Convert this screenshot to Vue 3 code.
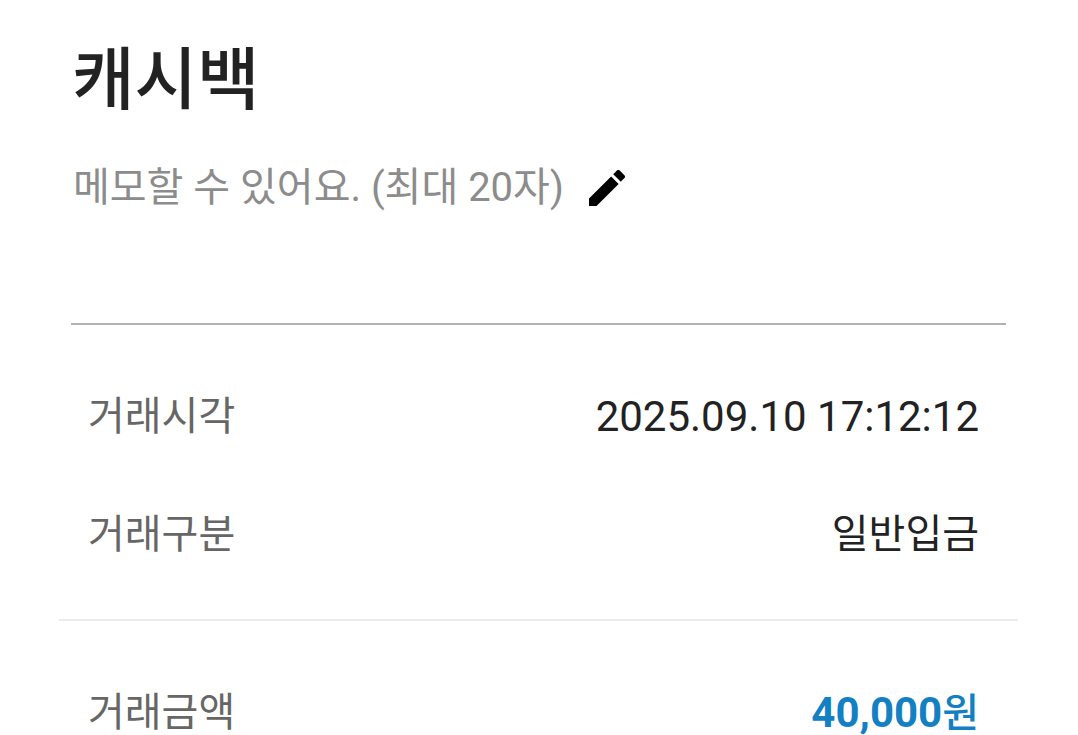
<script setup>
import { ref } from 'vue'

const memo = ref('')
</script>

<template>
  <main class="page">
    <header class="head">
      <h1 class="title">캐시백</h1>
      <div class="memo">
        <input
          v-model="memo"
          class="memo-input"
          type="text"
          maxlength="20"
          aria-label="메모"
          placeholder="메모할 수 있어요. (최대 20자)"
        />
        <button class="edit" type="button" aria-label="메모 수정">
          <svg viewBox="3 3 18 18" aria-hidden="true">
            <path d="M3 17.25V21h3.75L17.81 9.94l-3.75-3.75L3 17.25zM20.71 7.04a1 1 0 0 0 0-1.41l-2.34-2.34a1 1 0 0 0-1.41 0l-1.83 1.83 3.75 3.75 1.83-1.83z" />
          </svg>
        </button>
      </div>
    </header>
    <dl class="rows">
      <div class="row">
        <dt>거래시각</dt>
        <dd><span class="number">2025.09.10 17:12:12</span></dd>
      </div>
      <div class="row">
        <dt>거래구분</dt>
        <dd>일반입금</dd>
      </div>
    </dl>
    <dl class="total">
      <div class="row">
        <dt>거래금액</dt>
        <dd class="amount"><span class="number">40,000</span><span class="unit">원</span></dd>
      </div>
    </dl>
  </main>
</template>

<style scoped>
.page {
  padding: 35px 60px 0 59px;
  font-family: Roboto, "Noto Sans CJK KR", sans-serif;
  color: #222;
}
.head {
  margin: 0 12px;
  padding-bottom: 105px;
  border-bottom: 2px solid #b3b3b3;
}
.title {
  margin: 0 0 31px;
  padding-left: 1px;
  font-size: 68px;
  line-height: 92px;
  font-weight: 500;
}
.memo {
  display: flex;
  align-items: center;
  gap: 20px;
}
.memo-input {
  box-sizing: border-box;
  width: 498px;
  height: 60px;
  padding: 0 0 0 2px;
  border: 0;
  outline: 0;
  background: none;
  font: 400 40px/60px Roboto, "Noto Sans CJK KR", sans-serif;
  color: #222;
}
.memo-input::placeholder {
  color: #8c8c8c;
  opacity: 1;
}
.edit {
  width: 36px;
  height: 36px;
  padding: 0;
  border: 0;
  background: none;
}
.edit svg {
  display: block;
  width: 36px;
  height: 36px;
}
.rows,
.total {
  margin: 0;
  padding: 62px 39px 54px 29px;
}
.total {
  border-top: 2px solid #ebebeb;
  padding-bottom: 0;
}
.row {
  display: flex;
  justify-content: space-between;
  font-size: 40px;
  line-height: 60px;
}
.row + .row {
  margin-top: 57px;
}
dt {
  color: #666;
}
dd {
  margin: 0;
}
.number {
  font-size: 42px;
}
.amount {
  font-weight: 700;
  color: #1380c3;
}
.unit {
  font-weight: 500;
}
</style>

<style>
body {
  background: #fff;
}
</style>
